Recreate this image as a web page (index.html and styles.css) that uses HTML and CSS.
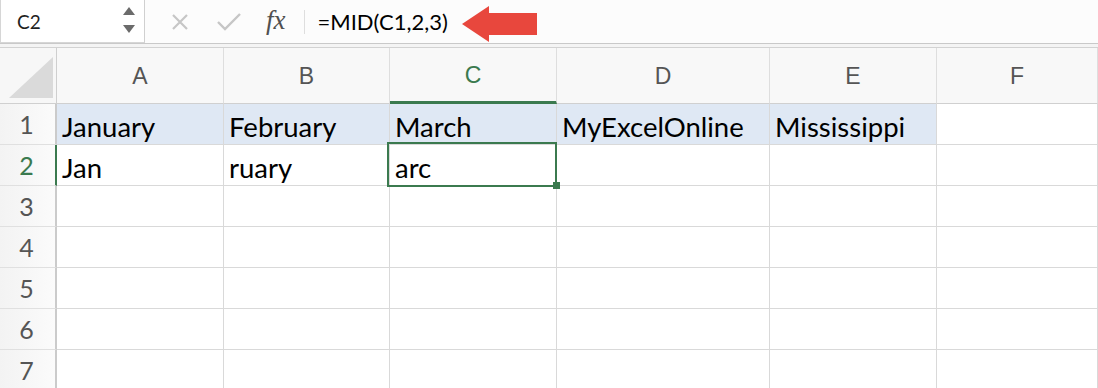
FILE: index.html
```html
<!DOCTYPE html>
<html>
<head>
<meta charset="utf-8">
<link rel="stylesheet" href="styles.css">
</head>
<body>
<div class="app">
  <div class="fbar">
    <div class="namebox">
      <span class="ref">C2</span>
      <svg class="spin" width="14" height="30" viewBox="0 0 14 30">
        <polygon points="7,1 13,9 1,9" fill="#6b6b6b"/>
        <polygon points="1,19 13,19 7,27" fill="#6b6b6b"/>
      </svg>
    </div>
    <div class="tools">
      <svg class="ico-x" width="18" height="18" viewBox="0 0 18 18">
        <path d="M2 2 L16 16 M16 2 L2 16" stroke="#c6c6c6" stroke-width="2.2" fill="none"/>
      </svg>
      <svg class="ico-check" width="26" height="20" viewBox="0 0 26 20">
        <path d="M2 10 L9 17 L24 2" stroke="#c6c6c6" stroke-width="2.4" fill="none"/>
      </svg>
      <span class="fx">fx</span>
    </div>
    <div class="sep"></div>
    <div class="formula">=MID(C1,2,3)</div>
    <svg class="arrow" width="76" height="38" viewBox="0 0 76 38">
      <polygon points="0,19 27,1 27,8 75,8 75,30 27,30 27,37" fill="#e8473d"/>
    </svg>
  </div>
  <div class="gap"></div>
  <div class="sheet">
    <div class="corner">
      <svg width="56" height="55" viewBox="0 0 56 55">
        <polygon points="9,50 53,50 53,9" fill="#dadada"/>
      </svg>
    </div>
    <div class="colh">A</div>
    <div class="colh">B</div>
    <div class="colh colh-sel">C</div>
    <div class="colh">D</div>
    <div class="colh">E</div>
    <div class="colh">F</div>

    <div class="rowh">1</div>
    <div class="cell hl">January</div>
    <div class="cell hl">February</div>
    <div class="cell hl">March</div>
    <div class="cell hl">MyExcelOnline</div>
    <div class="cell hl">Mississippi</div>
    <div class="cell"></div>

    <div class="rowh rowh-sel">2</div>
    <div class="cell">Jan</div>
    <div class="cell">ruary</div>
    <div class="cell sel">arc</div>
    <div class="cell"></div>
    <div class="cell"></div>
    <div class="cell"></div>

    <div class="rowh">3</div>
    <div class="cell"></div><div class="cell"></div><div class="cell"></div><div class="cell"></div><div class="cell"></div><div class="cell"></div>
    <div class="rowh">4</div>
    <div class="cell"></div><div class="cell"></div><div class="cell"></div><div class="cell"></div><div class="cell"></div><div class="cell"></div>
    <div class="rowh">5</div>
    <div class="cell"></div><div class="cell"></div><div class="cell"></div><div class="cell"></div><div class="cell"></div><div class="cell"></div>
    <div class="rowh">6</div>
    <div class="cell"></div><div class="cell"></div><div class="cell"></div><div class="cell"></div><div class="cell"></div><div class="cell"></div>
    <div class="rowh">7</div>
    <div class="cell"></div><div class="cell"></div><div class="cell"></div><div class="cell"></div><div class="cell"></div><div class="cell"></div>
  </div>
</div>
</body>
</html>
```
FILE: styles.css
```css
* { box-sizing: border-box; }
html, body { margin: 0; padding: 0; background: #ffffff; }
body { width: 1098px; height: 388px; overflow: hidden; font-family: "Lato", "Noto Sans", sans-serif; }

.app { display: flex; flex-direction: column; }

.fbar {
  position: relative;
  height: 44px;
  display: flex;
  align-items: center;
  background: #fcfcfc;
  border-bottom: 1px solid #c9c9c9;
}
.namebox {
  width: 145px;
  height: 43px;
  align-self: flex-start;
  display: flex;
  align-items: center;
  justify-content: space-between;
  padding: 0 8px 0 16px;
  background: #ffffff;
  border-left: 1px solid #d6d6d6;
  border-right: 1px solid #d0d0d0;
  border-bottom: 1px solid #d6d6d6;
}
.ref { font-size: 19px; color: #1f1f1f; }
.spin { display: block; }

.tools { display: flex; align-items: center; padding-left: 26px; }
.ico-x { display: block; }
.ico-check { display: block; margin-left: 27px; }
.fx {
  margin-left: 24px;
  font-family: "Liberation Serif", serif;
  font-style: italic;
  font-size: 27px;
  color: #505050;
  line-height: 1;
  margin-top: -3px;
}
.sep { width: 1px; height: 24px; background: #dedede; margin-left: 18px; }
.formula { margin-left: 13px; font-size: 22px; color: #000; }
.arrow { position: absolute; left: 462px; top: 5px; }

.gap { height: 4px; background: #f4f4f4; border-bottom: 1px solid #d2d2d2; }

.sheet {
  display: grid;
  grid-template-columns: 57px 167px 166px 167px 213px 167px 1fr;
  grid-template-rows: 56px;
  grid-auto-rows: 41px;
}
.corner {
  background: #f7f7f7;
  border-right: 1px solid #cfcfcf;
  border-bottom: 1px solid #d0d0d0;
}
.corner svg { display: block; }
.colh {
  display: flex;
  align-items: center;
  justify-content: center;
  background: #f8f8f8;
  border-right: 1px solid #dedede;
  border-bottom: 1px solid #d0d0d0;
  font-family: "Liberation Sans", "Open Sans", sans-serif;
  font-size: 23px;
  color: #555555;
  padding-top: 2px;
}
.colh-sel { color: #3b7a4f; border-bottom: 3px solid #3b7a4f; }

.rowh {
  display: flex;
  align-items: center;
  justify-content: center;
  background: linear-gradient(to right, #f3f3f3, #fbfbfb);
  border-right: 2px solid #cbcbcb;
  border-bottom: 1px solid #e0e0e0;
  font-size: 25px;
  color: #555555;
  padding-right: 2px;
}
.rowh-sel { color: #3b7a4f; border-right: 2px solid #3b7a4f; }

.cell {
  display: flex;
  align-items: flex-end;
  padding: 0 0 1px 5px;
  border-right: 1px solid #d9d9d9;
  border-bottom: 1px solid #d9d9d9;
  font-size: 27.5px;
  color: #000000;
  white-space: nowrap;
  line-height: 1.2;
}
.hl { background: #dfe8f4; }
.sel { position: relative; }
.sel::after {
  content: "";
  position: absolute;
  left: -3px; top: -3px; right: -1px; bottom: -2px;
  border: 2px solid #3b7a4f;
}
.sel::before {
  content: "";
  position: absolute;
  right: -4px; bottom: -4px;
  width: 7px; height: 7px;
  background: #3b7a4f;
  z-index: 1;
}
```
